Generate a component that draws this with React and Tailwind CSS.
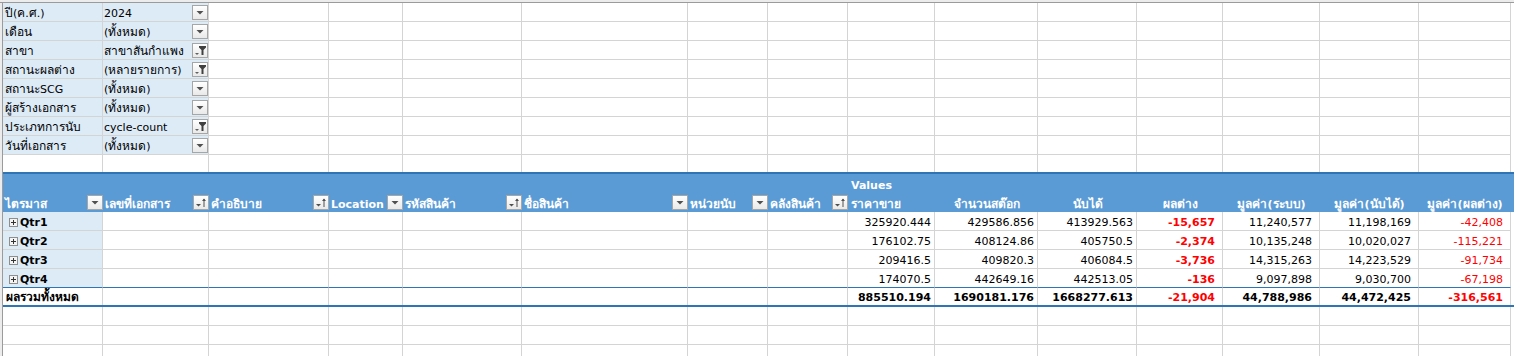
import React from "react";

const COLS = [
  "w-[100px]",
  "w-[106px]",
  "w-[120px]",
  "w-[74px]",
  "w-[119px]",
  "w-[166px]",
  "w-[80px]",
  "w-[80px]",
  "w-[87px]",
  "w-[103px]",
  "w-[99px]",
  "w-[86px]",
  "w-[97px]",
  "w-[99px]",
  "w-[92px]",
];

const filters = [
  { label: "ปี(ค.ศ.)", value: "2024", icon: "arrow" },
  { label: "เดือน", value: "(ทั้งหมด)", icon: "arrow" },
  { label: "สาขา", value: "สาขาสันกำแพง", icon: "funnel" },
  { label: "สถานะผลต่าง", value: "(หลายรายการ)", icon: "funnel" },
  { label: "สถานะSCG", value: "(ทั้งหมด)", icon: "arrow" },
  { label: "ผู้สร้างเอกสาร", value: "(ทั้งหมด)", icon: "arrow" },
  { label: "ประเภทการนับ", value: "cycle-count", icon: "funnel" },
  { label: "วันที่เอกสาร", value: "(ทั้งหมด)", icon: "arrow" },
];

const rowFields = [
  { name: "ไตรมาส", icon: "arrow" },
  { name: "เลขที่เอกสาร", icon: "sort" },
  { name: "คำอธิบาย", icon: "sort" },
  { name: "Location", icon: "arrow" },
  { name: "รหัสสินค้า", icon: "sort" },
  { name: "ชื่อสินค้า", icon: "arrow" },
  { name: "หน่วยนับ", icon: "arrow" },
  { name: "คลังสินค้า", icon: "sort" },
];

const valueFields = ["จำนวนสต๊อก", "นับได้", "ผลต่าง", "มูลค่า(ระบบ)", "มูลค่า(นับได้)", "มูลค่า(ผลต่าง)"];

const quarters = [
  ["Qtr1", "325920.444", "429586.856", "413929.563", "-15,657", "11,240,577", "11,198,169", "-42,408"],
  ["Qtr2", "176102.75", "408124.86", "405750.5", "-2,374", "10,135,248", "10,020,027", "-115,221"],
  ["Qtr3", "209416.5", "409820.3", "406084.5", "-3,736", "14,315,263", "14,223,529", "-91,734"],
  ["Qtr4", "174070.5", "442649.16", "442513.05", "-136", "9,097,898", "9,030,700", "-67,198"],
];

const total = ["885510.194", "1690181.176", "1668277.613", "-21,904", "44,788,986", "44,472,425", "-316,561"];

// Thai runs come out a bit small in the fallback font, bump them up
function Txt({ children }) {
  const parts = String(children).split(/([\u0E00-\u0E7F]+)/);
  return parts.map((p, i) =>
    /[\u0E00-\u0E7F]/.test(p) ? (
      <span key={i} className="text-[12px]">
        {p}
      </span>
    ) : (
      p
    )
  );
}

function DropButton({ icon }) {
  return (
    <div className="w-[16px] h-[15px] shrink-0 border border-[#a6a6a6] bg-gradient-to-b from-white to-[#e9e9e9] flex items-center justify-center">
      <svg width="14" height="13" viewBox="0 0 14 13">
        {icon === "arrow" && <path d="M3.5 5h7l-3.5 3.5z" fill="#505050" />}
        {icon === "sort" && (
          <g fill="#505050">
            <path d="M2 8h5l-2.5 2.5z" />
            <rect x="9.5" y="3" width="1" height="8" />
            <path d="M8 5h4l-2-2.5z" />
          </g>
        )}
        {icon === "funnel" && (
          <g fill="#404040">
            <path d="M2 9h4l-2 2z" fill="#606060" />
            <path d="M6 2h7v1.5l-2.5 2.5v5h-2v-5l-2.5-2.5z" />
          </g>
        )}
      </svg>
    </div>
  );
}

function ExpandIcon() {
  return (
    <span className="w-[9px] h-[9px] border border-[#8e8e8e] bg-[#f4f4f4] mr-[2px] mb-[3px] shrink-0 flex items-center justify-center">
      <svg width="7" height="7" viewBox="0 0 7 7">
        <rect x="1" y="3" width="5" height="1" fill="#333" />
        <rect x="3" y="1" width="1" height="5" fill="#333" />
      </svg>
    </span>
  );
}

function GridRow({ children, border = "border-b-[#d4d4d4]" }) {
  return (
    <div className="flex h-[19px]">
      {COLS.map((w, i) => (
        <div
          key={i}
          className={`${w} shrink-0 border-r border-b border-r-[#d4d4d4] ${border} overflow-hidden`}
        >
          {children ? children(i) : null}
        </div>
      ))}
    </div>
  );
}

export default function App() {
  return (
    <div className="w-[1514px] h-[356px] overflow-hidden bg-white text-black text-[11px] font-['Tahoma','DejaVu_Sans',sans-serif]">
      <div className="h-[3px] bg-[#ececec] border-b border-[#9b9b9b]" />
      <div className="flex">
        <div className="w-[3px] shrink-0 bg-[#ececec] border-r border-[#9b9b9b]" />
        <div className="flex-1">
          {/* report filters */}
          {filters.map((f) => (
            <div key={f.label} className="flex h-[19px]">
              {COLS.map((w, i) => (
                <div
                  key={i}
                  className={`${w} shrink-0 border-r border-b border-[#d4d4d4] overflow-hidden ${
                    i < 2 ? "bg-[#ddebf7]" : ""
                  }`}
                >
                  {i === 0 && (
                    <div className="pl-[2px] h-full flex items-end leading-[15px] whitespace-nowrap">
                      <span>
                        <Txt>{f.label}</Txt>
                      </span>
                    </div>
                  )}
                  {i === 1 && (
                    <div className="pl-[1px] h-full flex items-center justify-between">
                      <span className="leading-[15px] self-end whitespace-nowrap">
                        <Txt>{f.value}</Txt>
                      </span>
                      <DropButton icon={f.icon} />
                    </div>
                  )}
                </div>
              ))}
            </div>
          ))}

          {/* spacer row */}
          <div className="flex h-[17px]">
            {COLS.map((w, i) => (
              <div key={i} className={`${w} shrink-0 border-r border-[#d4d4d4]`} />
            ))}
          </div>

          {/* pivot header */}
          <div className="border-t-2 border-[#2f75b5] bg-[#5b9bd5] text-white font-bold">
            <div className="flex h-[19px]">
              {COLS.map((w, i) => (
                <div key={i} className={`${w} shrink-0 flex items-end leading-[15px] pl-[3px]`}>
                  {i === 8 ? "Values" : ""}
                </div>
              ))}
            </div>
            <div className="flex h-[19px]">
              {COLS.map((w, i) => {
                if (i < 8) {
                  const f = rowFields[i];
                  return (
                    <div key={i} className={`${w} shrink-0 flex items-center justify-between pl-[2px] overflow-hidden`}>
                      <span className="self-end leading-[15px] whitespace-nowrap">
                        <Txt>{f.name}</Txt>
                      </span>
                      <DropButton icon={f.icon} />
                    </div>
                  );
                }
                if (i === 8) {
                  return (
                    <div key={i} className={`${w} shrink-0 flex items-end leading-[15px] pl-[3px]`}>
                      <span>
                        <Txt>ราคาขาย</Txt>
                      </span>
                    </div>
                  );
                }
                return (
                  <div key={i} className={`${w} shrink-0 flex items-end justify-center leading-[15px] whitespace-nowrap`}>
                    <span>
                      <Txt>{valueFields[i - 9]}</Txt>
                    </span>
                  </div>
                );
              })}
            </div>
          </div>

          {/* quarter rows */}
          {quarters.map((q, r) => (
            <GridRow key={q[0]} border={r === 3 ? "border-b-[#2f75b5]" : "border-b-[#d4d4d4]"}>
              {(i) => {
                if (i === 0)
                  return (
                    <div className="h-full bg-[#ddebf7] flex items-end pl-[6px] font-bold">
                      <ExpandIcon />
                      <span className="leading-[15px]">{q[0]}</span>
                    </div>
                  );
                if (i < 8) return null;
                const v = q[i - 7];
                const pad = i >= 11 ? "pr-[7px]" : "pr-[3px]";
                const color = i === 11 ? "text-[#ff0000] font-bold" : i === 14 ? "text-[#ff0000]" : "";
                return (
                  <div className={`h-full flex items-end justify-end leading-[15px] ${pad} ${color}`}>{v}</div>
                );
              }}
            </GridRow>
          ))}

          {/* grand total */}
          <div className="flex h-[19px] border-b-2 border-[#2f75b5] font-bold">
            {COLS.map((w, i) => {
              let content = null;
              if (i === 0)
                content = (
                  <div className="pl-[3px] h-full flex items-end leading-[15px] whitespace-nowrap">
                    <span className="text-[12px]">ผลรวมทั้งหมด</span>
                  </div>
                );
              if (i >= 8) {
                const pad = i >= 11 ? "pr-[7px]" : "pr-[3px]";
                const color = i === 11 || i === 14 ? "text-[#ff0000]" : "";
                content = (
                  <div className={`h-full flex items-end justify-end leading-[15px] ${pad} ${color}`}>{total[i - 8]}</div>
                );
              }
              return (
                <div key={i} className={`${w} shrink-0 border-r border-[#d4d4d4] overflow-hidden`}>
                  {content}
                </div>
              );
            })}
          </div>

          {/* blank rows */}
          <GridRow />
          <GridRow />
          <GridRow />
        </div>
      </div>
    </div>
  );
}
